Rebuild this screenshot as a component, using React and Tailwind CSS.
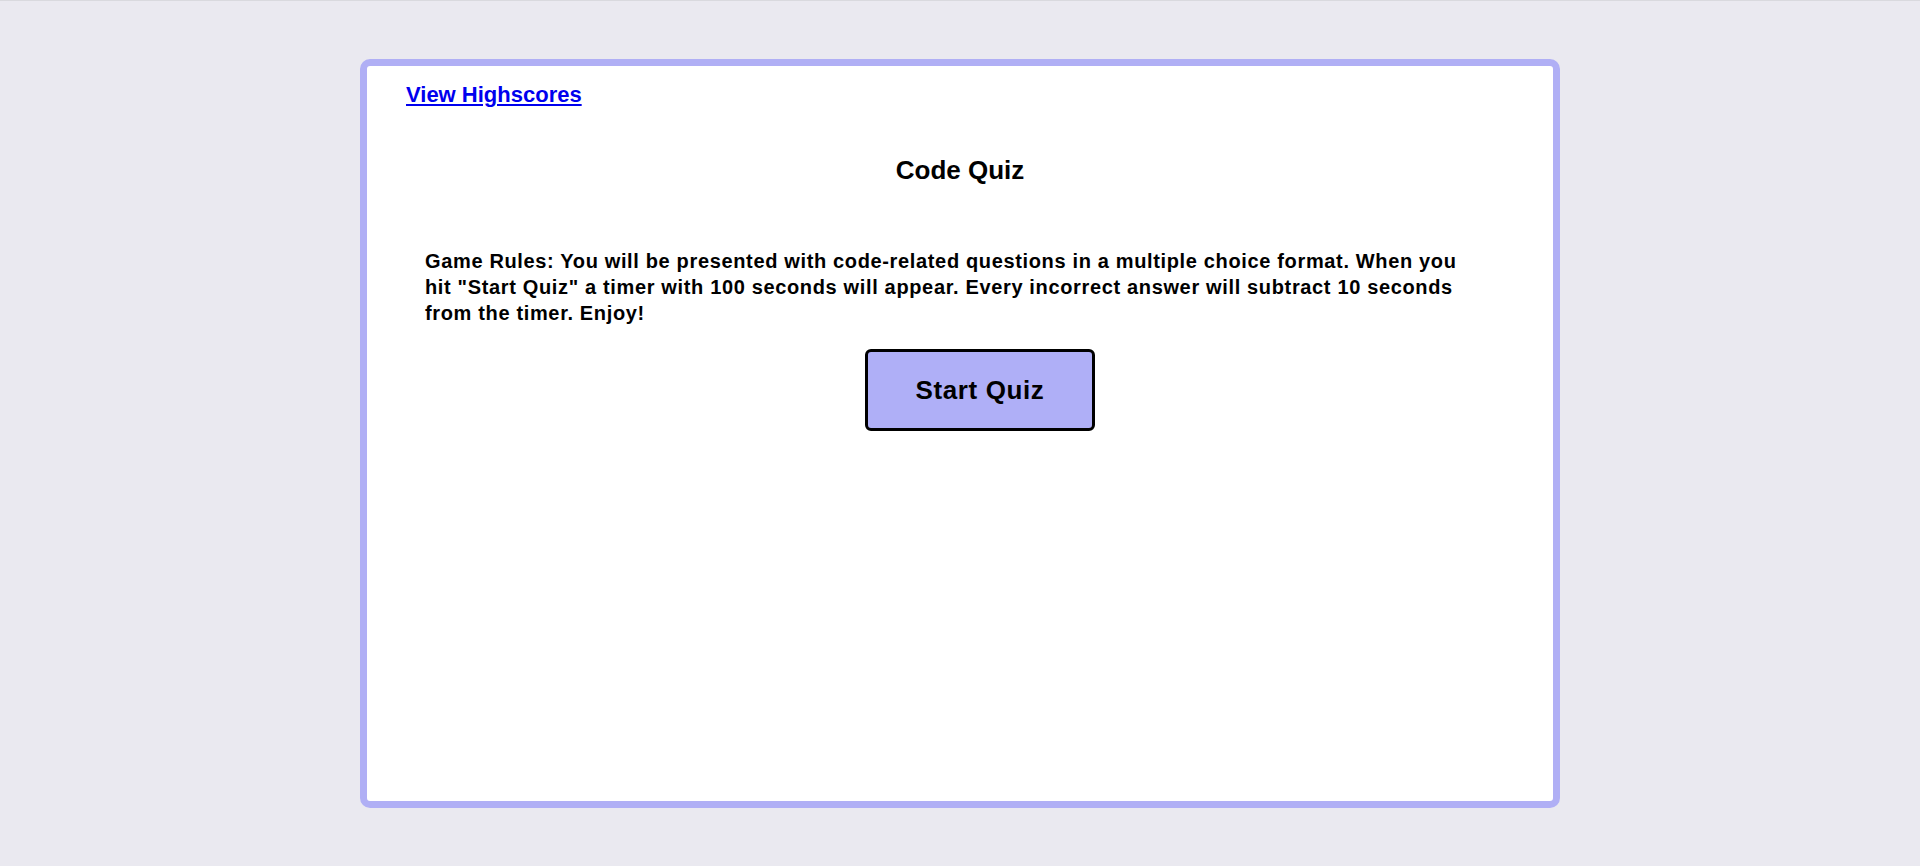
export default function App() {
  const body = { fontFamily: "'Liberation Sans', Arial, sans-serif" };

  return (
    <div className="min-h-screen bg-[#eae9f0] border-t border-[#d9d9de] pt-[58px]">
      <div className="mx-auto w-[1200px] h-[749px] bg-white border-[7px] border-[#b0aff5] rounded-[10px]">
        <div className="pl-[39px] pt-[16px]" style={body}>
          <a href="#" className="text-[22px] leading-[26px] font-bold text-[#0000ee] underline">
            View Highscores
          </a>
        </div>

        <h1 className="mt-[46px] text-center text-[26px] leading-[30px] font-bold text-black" style={body}>
          Code Quiz
        </h1>

        <div className="ml-[58px] w-[1110px] mt-[63px]" style={body}>
          <p className="w-[1048px] text-[20px] leading-[26px] tracking-[0.65px] font-bold text-black">
            Game Rules: You will be presented with code-related questions in a multiple choice format. When you
            hit "Start Quiz" a timer with 100 seconds will appear. Every incorrect answer will subtract 10 seconds
            from the timer. Enjoy!
          </p>

          <div className="flex justify-center mt-[23px]">
            <button className="w-[230px] h-[82px] bg-[#afaff7] border-[3px] border-black rounded-[6px] text-[26px] tracking-[0.6px] font-bold text-black">
              Start Quiz
            </button>
          </div>
        </div>
      </div>
    </div>
  );
}
